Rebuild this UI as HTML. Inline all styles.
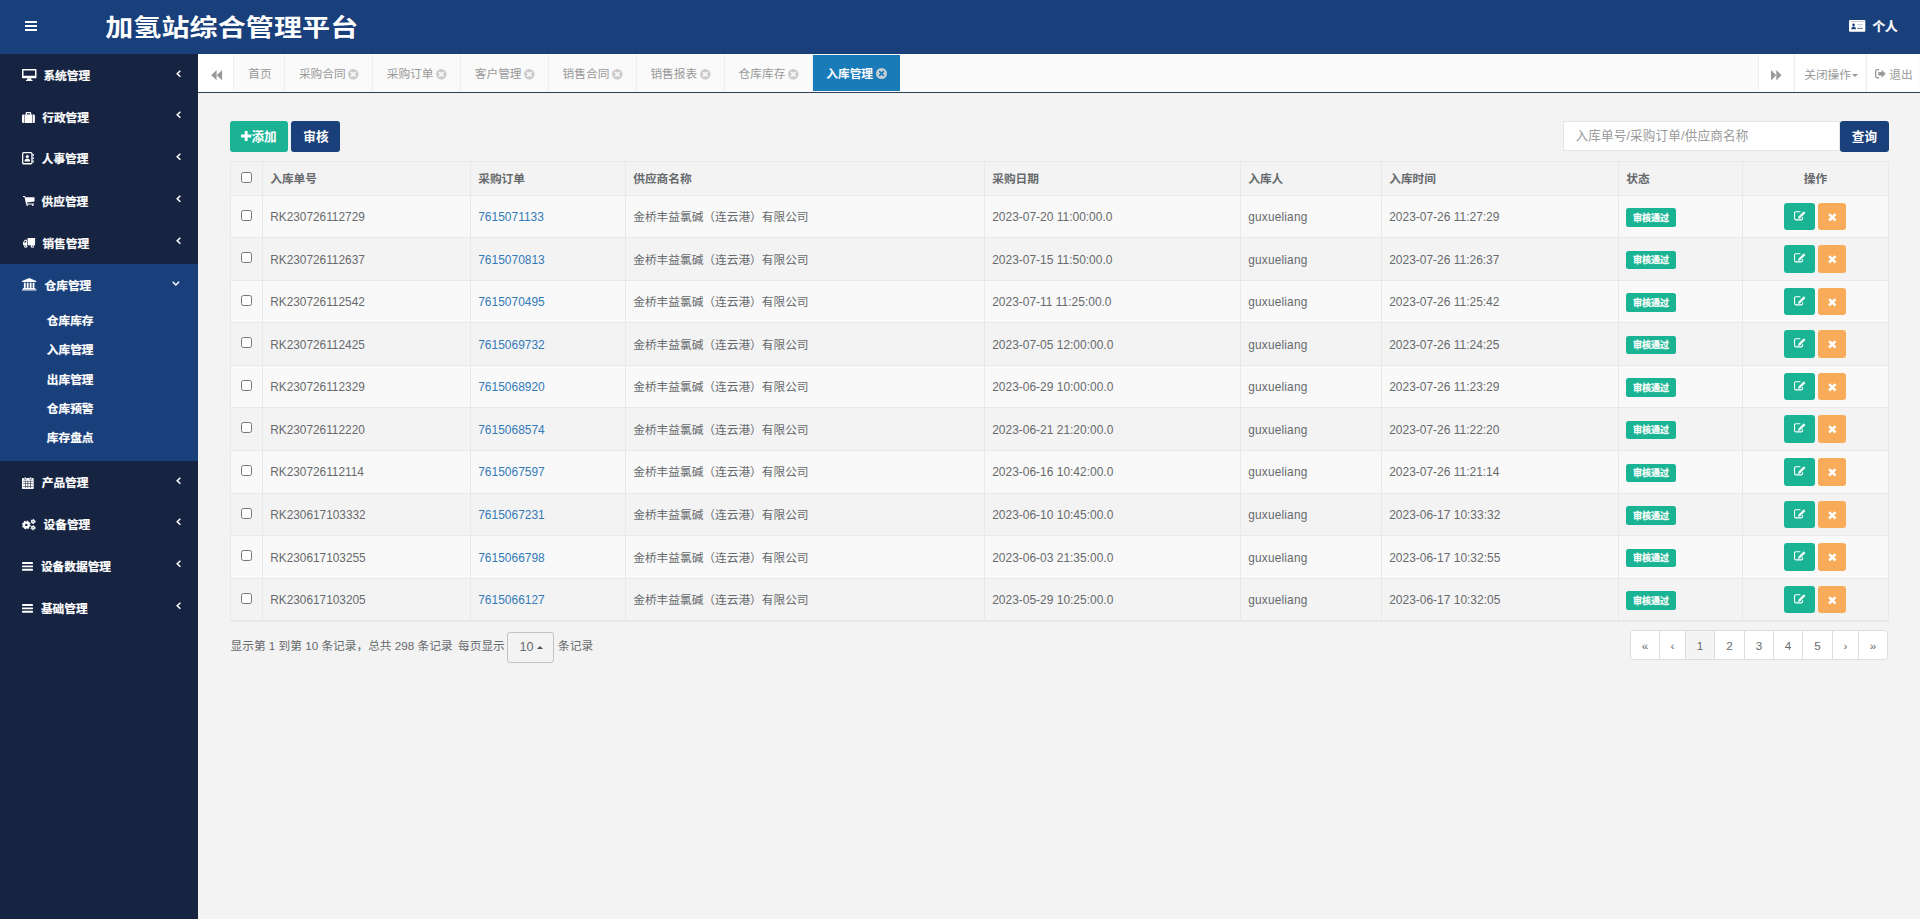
<!DOCTYPE html>
<html lang="zh-CN"><head><meta charset="utf-8"><title>加氢站综合管理平台</title>
<style>
*{box-sizing:border-box;margin:0;padding:0}
html,body{width:1920px;height:919px;overflow:hidden;background:#f3f3f4}
body{position:relative;font-family:"Liberation Sans","Noto Sans CJK SC",sans-serif;font-size:11.7px;color:#676a6c}
svg{position:absolute;display:block;overflow:visible}
i{font-style:normal}
/* header */
#hdr{position:absolute;left:0;top:0;width:1920px;height:54px;background:#1a407b}
#title{position:absolute;left:105.2px;top:0;height:54px;line-height:54px;font-size:28px;font-weight:700;letter-spacing:.12px;color:#fff;white-space:nowrap;transform:scaleY(.835);transform-origin:0 35px}
#user{position:absolute;left:1872.5px;top:15px;-webkit-text-stroke:.3px #fff;height:24px;line-height:24px;font-size:12.6px;font-weight:700;color:#fff}
/* sidebar */
#side{position:absolute;left:0;top:54px;width:198px;height:865px;background:#162341;color:#fff;font-weight:700}
#act{position:absolute;left:0;top:209.5px;width:198px;height:197.5px;background:#1a407b}
.mi{position:absolute;left:0;width:198px;height:41.9px;line-height:41.9px}
.mt{position:absolute;top:1px;margin-left:-.5px;white-space:nowrap}
.si{position:absolute;left:46.8px;height:29.3px;line-height:29.3px;white-space:nowrap}
/* tabs */
#tabs{position:absolute;left:198px;top:54px;width:1722px;height:39px;background:#fafafa;border-bottom:1px solid #2f4050;color:#999}
.roll{position:absolute;top:0;height:38px;background:#fff}
.roll.txt span{position:absolute;top:0;line-height:42.4px;white-space:nowrap}
.tab{position:absolute;top:0;height:38px;line-height:40.4px;margin-left:.5px;border-right:1px solid #eee;white-space:nowrap}
.tab span{position:absolute;left:13.8px;top:0}
.tab.on{top:1px;height:36px;line-height:37.8px;margin-left:0;background:#1a7bb9;color:#fff;font-weight:700;border-right:0}
.caret{position:absolute;left:56.7px;top:19.5px;width:0;height:0;border-left:3px solid transparent;border-right:3px solid transparent;border-top:3.5px solid #999}
/* main */
#main{position:absolute;left:0;top:0;width:1920px;height:919px;pointer-events:none}
.btn{position:absolute;top:121px;height:31px;border-radius:3px;color:#fff;font-size:12.6px;font-weight:700;line-height:31px;white-space:nowrap}
.btn span{position:absolute;top:1px}
.btn.add{left:230px;width:58px;background:#1ab394}
.btn.add span{left:21.5px}
.btn.chk{left:291px;width:49px;background:#1a407b}
.btn.chk span{left:12.3px}
.btn.qry{left:1840px;width:49px;background:#1a407b}
.btn.qry span{left:11.8px}
#search{position:absolute;left:1563px;top:121px;width:277px;height:30px;background:#fff;border:1px solid #e5e6e7;font-size:12.6px;color:#9a9a9a;line-height:28px}
#search span{position:absolute;left:11.5px;top:0;white-space:nowrap;letter-spacing:.15px}
/* table */
#tbl{position:absolute;left:230px;top:161px;width:1659px;height:461px;border:1px solid #e7eaec}
.tr{position:absolute;left:0;width:1657px;border-bottom:1px solid #e7eaec}
.tr.odd{background:#f9f9f9}
.tr.th{font-weight:700}
.td{position:absolute;top:0;bottom:0;border-left:1px solid #e7eaec;padding-left:7.2px;white-space:nowrap;display:flex;align-items:center}
.c0{left:0;width:31px;border-left:0;padding:0}
.c1{left:31px;width:208px}
.c2{left:239px;width:155px}
.c3{left:394px;width:359px}
.c4{left:753px;width:256px}
.c5{left:1009px;width:141px}
.c6{left:1150px;width:237px}
.c7{left:1387px;width:124px}
.c8{left:1511px;width:146px;padding:0}
.th .c8{justify-content:center}
a{color:#337ab7}
.cb{position:absolute;left:10px;top:50%;margin-top:-6.7px;width:11px;height:11px;border:1px solid #767676;border-radius:2.5px;background:#fff}
.lab{position:absolute;left:7px;top:12px;width:50px;height:19px;line-height:20.6px;-webkit-text-stroke:.25px #fff;border-radius:2.5px;background:#1ab394;color:#fff;font-size:9px;font-weight:700;text-align:center}
.ab{position:absolute;top:7px;bottom:7px;border-radius:3px}
.ab.ed{left:41px;width:31px;background:#1ab394}
.ab.de{left:75px;width:28px;background:#f8ac59}
/* pagination */
#pinfo,#pinfo2,#pinfo3{position:absolute;top:636px;height:20px;line-height:20px;white-space:nowrap}
#pinfo{left:230.5px}
#pinfo2{left:458px}
#pinfo3{left:558px}
#psize{position:absolute;left:507px;top:632px;width:47px;height:31px;border:1px solid #c2c2c2;border-radius:3px;font-size:12.6px;line-height:29px}
#psize span{position:absolute;left:11.5px;top:0}
.caretup{position:absolute;left:28.8px;top:13.3px;width:0;height:0;border-left:3.2px solid transparent;border-right:3.2px solid transparent;border-bottom:3.3px solid #555}
#pager{position:absolute;left:1630px;top:630px;width:258px;height:30px;background:#fff;border:1px solid #ddd;border-radius:3.5px;overflow:hidden}
.pg{position:absolute;top:-1px;height:30px;line-height:31.5px;text-align:center;border-left:1px solid #ddd}
.pg:first-child{border-left:0}
.pg.cur{background:#f4f4f4}

.tr:not(.th) .c1{font-size:11.85px}
.tr:not(.th) .c2,.tr:not(.th) .c4,.tr:not(.th) .c6{font-size:11.97px}
.tr:not(.th) .c5{font-size:11.85px;letter-spacing:.2px}
.th .td{padding-bottom:1.6px}
.tr:not(.th) .c3{padding-bottom:2.6px}
#side{-webkit-text-stroke:.2px #fff}
.tr.tall .lab{top:13px;height:18px;line-height:19.6px}
.tr.lo .td{padding-top:2px}
.tr.lo .c3{padding-top:2px;padding-bottom:2.6px}

</style></head><body>
<div id="hdr"><svg style="left:25px;top:20.5px" width="12" height="10" viewBox="0 0 12 10" ><rect y="0" width="12" height="2" rx=".3" fill="#fff"/><rect y="4" width="12" height="2" rx=".3" fill="#fff"/><rect y="8" width="12" height="2" rx=".3" fill="#fff"/></svg><div id="title">加氢站综合管理平台</div><svg style="left:1848.9px;top:20.2px" width="16.3" height="11.8" viewBox="0 0 16.3 11.8" ><rect width="16.3" height="11.8" rx="1" fill="#fff"/><rect x="1" y="1.1" width="14.3" height=".5" fill="#8a98b3"/><circle cx="4.6" cy="4.9" r="1.3" fill="#1a407b"/><path d="M2.3 9.3c0-1.9 1-2.7 2.3-2.7s2.3.8 2.3 2.7z" fill="#1a407b"/><rect x="8.3" y="4" width="5.4" height="1" fill="#c5cddd"/><rect x="8.3" y="5.9" width="4.6" height=".8" fill="#dfe4ed"/><rect x="8.3" y="7.9" width="5.4" height="1" fill="#5b729b"/></svg><div id="user">个人</div></div>
<div id="side">
<div id="act"></div>
<div class="mi" style="top:0.0px"><svg style="left:21.8px;top:15.1px" width="14.5" height="11.9" viewBox="0 0 14.5 11.9" ><path fill-rule="evenodd" fill="#fff" d="M.9 0h12.7a.9.9 0 0 1 .9.9v7.5a.9.9 0 0 1-.9.9H.9a.9.9 0 0 1-.9-.9V.9A.9.9 0 0 1 .9 0zM1.5 1.5v5.2h11.5V1.5z"/><path fill="#fff" d="M5.4 9.3h3.7l.5 1.6h.9v1H4v-1h.9z"/></svg><span class="mt" style="left:43.9px">系统管理</span><svg style="left:175.6px;top:15.6px" width="5.2" height="7.4" viewBox="0 0 5.2 7.4" ><path d="M4.4 .7L1.2 3.7l3.2 3" fill="none" stroke="#fff" stroke-width="1.5"/></svg></div>
<div class="mi" style="top:41.9px"><svg style="left:22.2px;top:16.3px" width="12.9" height="11" viewBox="0 0 12.9 11" ><path fill="#fff" d="M3.7 2.4V1.1A1.1 1.1 0 0 1 4.8 0h3.3a1.1 1.1 0 0 1 1.1 1.1v1.3H7.9V1.2H5v1.2z"/><path fill="#fff" d="M1.2 2.4h.8V11h-.8A1.2 1.2 0 0 1 0 9.8V3.6a1.2 1.2 0 0 1 1.2-1.2z"/><rect x="2.5" y="2.4" width="7.9" height="8.6" fill="#fff"/><path fill="#fff" d="M10.9 2.4h.8a1.2 1.2 0 0 1 1.2 1.2v6.2a1.2 1.2 0 0 1-1.2 1.2h-.8z"/></svg><span class="mt" style="left:42.7px">行政管理</span><svg style="left:175.6px;top:15.6px" width="5.2" height="7.4" viewBox="0 0 5.2 7.4" ><path d="M4.4 .7L1.2 3.7l3.2 3" fill="none" stroke="#fff" stroke-width="1.5"/></svg></div>
<div class="mi" style="top:83.8px"><svg style="left:22.1px;top:14.6px" width="11.8" height="12.4" viewBox="0 0 11.8 12.4" ><rect x=".65" y=".65" width="9.3" height="11.1" rx="1.1" fill="none" stroke="#fff" stroke-width="1.3"/><rect x="10.6" y="2" width="1.2" height="2" fill="#fff"/><rect x="10.6" y="5.2" width="1.2" height="2" fill="#fff"/><rect x="10.6" y="8.4" width="1.2" height="2" fill="#fff"/><circle cx="5.3" cy="4.5" r="1.6" fill="#fff"/><path fill="#fff" d="M2.5 9.5c0-2.1 1.2-2.9 2.8-2.9s2.8.8 2.8 2.9z"/></svg><span class="mt" style="left:42.2px;top:0">人事管理</span><svg style="left:175.6px;top:15.6px" width="5.2" height="7.4" viewBox="0 0 5.2 7.4" ><path d="M4.4 .7L1.2 3.7l3.2 3" fill="none" stroke="#fff" stroke-width="1.5"/></svg></div>
<div class="mi" style="top:125.7px"><svg style="left:22.7px;top:16.2px" width="11.5" height="10" viewBox="0 0 11.5 10" ><path fill="#fff" d="M0 0h2.1l.4 1.3h9v4.3l-7.7 1 .2.8h7v1H3.1L1.5 1H0z"/><circle cx="4.3" cy="9.1" r=".95" fill="#fff"/><circle cx="9.7" cy="9.1" r=".95" fill="#fff"/></svg><span class="mt" style="left:42.0px">供应管理</span><svg style="left:175.6px;top:15.6px" width="5.2" height="7.4" viewBox="0 0 5.2 7.4" ><path d="M4.4 .7L1.2 3.7l3.2 3" fill="none" stroke="#fff" stroke-width="1.5"/></svg></div>
<div class="mi" style="top:167.6px"><svg style="left:22.7px;top:16.3px" width="12.1" height="9.8" viewBox="0 0 12.1 9.8" ><rect x="4.6" y="0" width="7.5" height="7.2" rx=".4" fill="#fff"/><path fill-rule="evenodd" fill="#fff" d="M0 7.2V4.4l1.7-2.6h2.3v5.4zM1 4.5h2.1V2.8H2.1z"/><circle cx="2.8" cy="8.2" r="1.6" fill="#fff"/><circle cx="9.4" cy="8.2" r="1.6" fill="#fff"/><circle cx="2.8" cy="8.2" r=".6" fill="#162341"/><circle cx="9.4" cy="8.2" r=".6" fill="#162341"/></svg><span class="mt" style="left:42.9px">销售管理</span><svg style="left:175.6px;top:15.6px" width="5.2" height="7.4" viewBox="0 0 5.2 7.4" ><path d="M4.4 .7L1.2 3.7l3.2 3" fill="none" stroke="#fff" stroke-width="1.5"/></svg></div>
<div class="mi" style="top:209.5px"><svg style="left:21.9px;top:14.9px" width="14.35" height="12.5" viewBox="0 0 14.35 12.5" ><path fill="#fff" d="M7.18 0l7.17 2.9v1H0v-1z"/><rect x="1.9" y="4.7" width="1.8" height="5.2" fill="#fff"/><rect x="4.8" y="4.7" width="1.8" height="5.2" fill="#fff"/><rect x="7.75" y="4.7" width="1.8" height="5.2" fill="#fff"/><rect x="10.65" y="4.7" width="1.8" height="5.2" fill="#fff"/><rect x="1" y="10" width="12.35" height="1" fill="#fff"/><rect x="0" y="11.3" width="14.35" height="1.2" fill="#fff"/></svg><span class="mt" style="left:45.0px">仓库管理</span><svg style="left:172.4px;top:17px" width="7.8" height="5.2" viewBox="0 0 7.8 5.2" ><path d="M.7 .8l3.2 3.2L7.1 .8" fill="none" stroke="#fff" stroke-width="1.5"/></svg></div>
<div class="mi" style="top:407.0px"><svg style="left:22.2px;top:15.8px" width="11.7" height="12.1" viewBox="0 0 11.7 12.1" ><rect x="0" y="1.1" width="11.7" height="11" rx=".9" fill="#fff"/><rect x="2.3" y="0" width="1.7" height="2.9" rx=".5" fill="#fff" stroke="#162341" stroke-width=".5"/><rect x="7.7" y="0" width="1.7" height="2.9" rx=".5" fill="#fff" stroke="#162341" stroke-width=".5"/><rect x=".9" y="3.9" width="9.9" height=".55" fill="#162341"/><rect x=".9" y="6.5" width="9.9" height=".55" fill="#162341"/><rect x=".9" y="9" width="9.9" height=".55" fill="#162341"/><rect x="3.1" y="3.9" width=".55" height="7.4" fill="#162341"/><rect x="5.6" y="3.9" width=".55" height="7.4" fill="#162341"/><rect x="8.1" y="3.9" width=".55" height="7.4" fill="#162341"/></svg><span class="mt" style="left:42.2px">产品管理</span><svg style="left:175.6px;top:15.6px" width="5.2" height="7.4" viewBox="0 0 5.2 7.4" ><path d="M4.4 .7L1.2 3.7l3.2 3" fill="none" stroke="#fff" stroke-width="1.5"/></svg></div>
<div class="mi" style="top:448.9px"><svg style="left:22.2px;top:16.5px" width="13.6" height="11.3" viewBox="0 0 13.6 11.3" ><circle cx="4.3" cy="5.9" r="2.35" fill="none" stroke="#fff" stroke-width="2.3"/><circle cx="4.3" cy="5.9" r="3.7" fill="none" stroke="#fff" stroke-width="1.3" stroke-dasharray="1.7 1.206"/><circle cx="11.1" cy="2.5" r="1.3" fill="none" stroke="#fff" stroke-width="1.4"/><circle cx="11.1" cy="2.5" r="2.05" fill="none" stroke="#fff" stroke-width="1" stroke-dasharray="1.15 1"/><circle cx="11.1" cy="8.8" r="1.3" fill="none" stroke="#fff" stroke-width="1.4"/><circle cx="11.1" cy="8.8" r="2.05" fill="none" stroke="#fff" stroke-width="1" stroke-dasharray="1.15 1"/></svg><span class="mt" style="left:44.0px">设备管理</span><svg style="left:175.6px;top:15.6px" width="5.2" height="7.4" viewBox="0 0 5.2 7.4" ><path d="M4.4 .7L1.2 3.7l3.2 3" fill="none" stroke="#fff" stroke-width="1.5"/></svg></div>
<div class="mi" style="top:490.8px"><svg style="left:22.2px;top:16.9px" width="11" height="8.7" viewBox="0 0 11 8.7" ><rect y="0" width="11" height="1.9" rx=".4" fill="#fff"/><rect y="3.4" width="11" height="1.9" rx=".4" fill="#fff"/><rect y="6.8" width="11" height="1.9" rx=".4" fill="#fff"/></svg><span class="mt" style="left:41.4px">设备数据管理</span><svg style="left:175.6px;top:15.6px" width="5.2" height="7.4" viewBox="0 0 5.2 7.4" ><path d="M4.4 .7L1.2 3.7l3.2 3" fill="none" stroke="#fff" stroke-width="1.5"/></svg></div>
<div class="mi" style="top:532.7px"><svg style="left:22.2px;top:16.9px" width="11" height="8.7" viewBox="0 0 11 8.7" ><rect y="0" width="11" height="1.9" rx=".4" fill="#fff"/><rect y="3.4" width="11" height="1.9" rx=".4" fill="#fff"/><rect y="6.8" width="11" height="1.9" rx=".4" fill="#fff"/></svg><span class="mt" style="left:41.4px">基础管理</span><svg style="left:175.6px;top:15.6px" width="5.2" height="7.4" viewBox="0 0 5.2 7.4" ><path d="M4.4 .7L1.2 3.7l3.2 3" fill="none" stroke="#fff" stroke-width="1.5"/></svg></div>
<div class="si" style="top:252.0px">仓库库存</div>
<div class="si" style="top:281.3px">入库管理</div>
<div class="si" style="top:310.6px">出库管理</div>
<div class="si" style="top:339.9px">仓库预警</div>
<div class="si" style="top:369.2px">库存盘点</div>
</div>
<div id="tabs">
<div class="roll" style="left:0;width:36px;border-right:1px solid #eee"><svg style="left:12.7px;top:15.7px" width="11.1" height="10.3" viewBox="0 0 11.1 10.3" ><path fill="#999" d="M5.6 0v10.3L.2 5.15zM11.1 0v10.3L5.7 5.15z"/></svg></div>
<div class="tab" style="left:36.0px;width:50.6px"><span>首页</span></div>
<div class="tab" style="left:86.6px;width:87.8px"><span>采购合同</span><svg style="left:63.4px;top:14.8px" width="10.5" height="10.5" viewBox="0 0 10.5 10.5" ><circle cx="5.25" cy="5.25" r="5.25" fill="#ccc"/><path d="M3.04 3.04L7.46 7.46M7.46 3.04L3.04 7.46" stroke="#fafafa" stroke-width="1.7" fill="none"/></svg></div>
<div class="tab" style="left:174.4px;width:88.1px"><span>采购订单</span><svg style="left:63.4px;top:14.8px" width="10.5" height="10.5" viewBox="0 0 10.5 10.5" ><circle cx="5.25" cy="5.25" r="5.25" fill="#ccc"/><path d="M3.04 3.04L7.46 7.46M7.46 3.04L3.04 7.46" stroke="#fafafa" stroke-width="1.7" fill="none"/></svg></div>
<div class="tab" style="left:262.5px;width:87.8px"><span>客户管理</span><svg style="left:63.4px;top:14.8px" width="10.5" height="10.5" viewBox="0 0 10.5 10.5" ><circle cx="5.25" cy="5.25" r="5.25" fill="#ccc"/><path d="M3.04 3.04L7.46 7.46M7.46 3.04L3.04 7.46" stroke="#fafafa" stroke-width="1.7" fill="none"/></svg></div>
<div class="tab" style="left:350.3px;width:87.8px"><span>销售合同</span><svg style="left:63.4px;top:14.8px" width="10.5" height="10.5" viewBox="0 0 10.5 10.5" ><circle cx="5.25" cy="5.25" r="5.25" fill="#ccc"/><path d="M3.04 3.04L7.46 7.46M7.46 3.04L3.04 7.46" stroke="#fafafa" stroke-width="1.7" fill="none"/></svg></div>
<div class="tab" style="left:438.1px;width:88.2px"><span>销售报表</span><svg style="left:63.4px;top:14.8px" width="10.5" height="10.5" viewBox="0 0 10.5 10.5" ><circle cx="5.25" cy="5.25" r="5.25" fill="#ccc"/><path d="M3.04 3.04L7.46 7.46M7.46 3.04L3.04 7.46" stroke="#fafafa" stroke-width="1.7" fill="none"/></svg></div>
<div class="tab" style="left:526.3px;width:88.2px"><span>仓库库存</span><svg style="left:63.4px;top:14.8px" width="10.5" height="10.5" viewBox="0 0 10.5 10.5" ><circle cx="5.25" cy="5.25" r="5.25" fill="#ccc"/><path d="M3.04 3.04L7.46 7.46M7.46 3.04L3.04 7.46" stroke="#fafafa" stroke-width="1.7" fill="none"/></svg></div>
<div class="tab on" style="left:614.5px;width:87.5px"><span>入库管理</span><svg style="left:63px;top:13.2px" width="11" height="11" viewBox="0 0 11 11" ><circle cx="5.50" cy="5.50" r="5.50" fill="#c7cdd3"/><path d="M3.19 3.19L7.81 7.81M7.81 3.19L3.19 7.81" stroke="#1a7bb9" stroke-width="1.7" fill="none"/></svg></div>
<div class="roll" style="left:1560px;width:35px;border-left:1px solid #eee"><svg style="left:11.8px;top:15.6px" width="10.5" height="10.4" viewBox="0 0 10.5 10.4" ><path fill="#999" d="M0 0l5.2 5.2L0 10.4zM5.3 0l5.2 5.2-5.2 5.2z"/></svg></div>
<div class="roll txt" style="left:1596px;width:71px;border-left:1px solid #eee"><span style="left:9.2px">关闭操作</span><i class="caret"></i></div>
<div class="roll txt" style="left:1668px;width:53px;border-left:1px solid #eee"><svg style="left:8.0px;top:14.6px" width="10.7" height="9.4" viewBox="0 0 10.7 9.4" ><path fill="#999" d="M4 0v1.3H2.1a.8.8 0 0 0-.8.8v5.2a.8.8 0 0 0 .8.8H4v1.3H2.1A2.1 2.1 0 0 1 0 7.3V2.1A2.1 2.1 0 0 1 2.1 0z"/><path fill="#999" d="M6.6 .7l4.1 4-4.1 4V6.4H3.3V3H6.6z"/></svg><span style="left:22.2px;line-height:41px">退出</span></div>
</div>
<div id="main">
<div class="btn add"><svg style="left:10.9px;top:9.9px" width="10.3" height="10.1" viewBox="0 0 10.3 10.1" ><path fill="#fff" d="M3.7 0h2.9v3.6h3.7v2.9H6.6v3.6H3.7V6.5H0V3.6h3.7z"/></svg><span>添加</span></div>
<div class="btn chk"><span>审核</span></div>
<div id="search"><span>入库单号/采购订单/供应商名称</span></div>
<div class="btn qry"><span>查询</span></div>
<div id="tbl">
<div class="tr th" style="top:0;height:34px"><div class="td c0"><i class="cb"></i></div><div class="td c1">入库单号</div><div class="td c2">采购订单</div><div class="td c3">供应商名称</div><div class="td c4">采购日期</div><div class="td c5">入库人</div><div class="td c6">入库时间</div><div class="td c7">状态</div><div class="td c8">操作</div></div>
<div class="tr odd" style="top:34px;height:42px"><div class="td c0"><i class="cb"></i></div><div class="td c1">RK230726112729</div><div class="td c2"><a>7615071133</a></div><div class="td c3">金桥丰益氯碱（连云港）有限公司</div><div class="td c4">2023-07-20 11:00:00.0</div><div class="td c5">guxueliang</div><div class="td c6">2023-07-26 11:27:29</div><div class="td c7"><b class="lab">审核通过</b></div><div class="td c8"><i class="ab ed"><svg style="left:9.7px;top:7.8px" width="11.6" height="9.4" viewBox="0 0 11.6 9.4" ><path d="M6.4 .75H1.8A1.25 1.25 0 0 0 .55 2v5.6A1.25 1.25 0 0 0 1.8 8.85h5.6A1.25 1.25 0 0 0 8.65 7.6V6.2" fill="none" stroke="#fff" stroke-width="1.1"/><path fill="#fff" fill-opacity=".93" d="M9.8 .3l1.7 1.7-5.2 5.2-2.4.7.7-2.4z"/></svg></i><i class="ab de"><svg style="left:9.6px;top:9.7px" width="8.6" height="8.6" viewBox="0 0 8.6 8.6" ><path d="M1.1 1.1l6.4 6.4M7.5 1.1L1.1 7.5" stroke="#fff" stroke-width="2.5" fill="none"/></svg></i></div></div>
<div class="tr even tall lo" style="top:76px;height:43px"><div class="td c0"><i class="cb"></i></div><div class="td c1">RK230726112637</div><div class="td c2"><a>7615070813</a></div><div class="td c3">金桥丰益氯碱（连云港）有限公司</div><div class="td c4">2023-07-15 11:50:00.0</div><div class="td c5">guxueliang</div><div class="td c6">2023-07-26 11:26:37</div><div class="td c7"><b class="lab">审核通过</b></div><div class="td c8"><i class="ab ed"><svg style="left:9.7px;top:7.8px" width="11.6" height="9.4" viewBox="0 0 11.6 9.4" ><path d="M6.4 .75H1.8A1.25 1.25 0 0 0 .55 2v5.6A1.25 1.25 0 0 0 1.8 8.85h5.6A1.25 1.25 0 0 0 8.65 7.6V6.2" fill="none" stroke="#fff" stroke-width="1.1"/><path fill="#fff" fill-opacity=".93" d="M9.8 .3l1.7 1.7-5.2 5.2-2.4.7.7-2.4z"/></svg></i><i class="ab de"><svg style="left:9.6px;top:9.7px" width="8.6" height="8.6" viewBox="0 0 8.6 8.6" ><path d="M1.1 1.1l6.4 6.4M7.5 1.1L1.1 7.5" stroke="#fff" stroke-width="2.5" fill="none"/></svg></i></div></div>
<div class="tr odd" style="top:119px;height:42px"><div class="td c0"><i class="cb"></i></div><div class="td c1">RK230726112542</div><div class="td c2"><a>7615070495</a></div><div class="td c3">金桥丰益氯碱（连云港）有限公司</div><div class="td c4">2023-07-11 11:25:00.0</div><div class="td c5">guxueliang</div><div class="td c6">2023-07-26 11:25:42</div><div class="td c7"><b class="lab">审核通过</b></div><div class="td c8"><i class="ab ed"><svg style="left:9.7px;top:7.8px" width="11.6" height="9.4" viewBox="0 0 11.6 9.4" ><path d="M6.4 .75H1.8A1.25 1.25 0 0 0 .55 2v5.6A1.25 1.25 0 0 0 1.8 8.85h5.6A1.25 1.25 0 0 0 8.65 7.6V6.2" fill="none" stroke="#fff" stroke-width="1.1"/><path fill="#fff" fill-opacity=".93" d="M9.8 .3l1.7 1.7-5.2 5.2-2.4.7.7-2.4z"/></svg></i><i class="ab de"><svg style="left:9.6px;top:9.7px" width="8.6" height="8.6" viewBox="0 0 8.6 8.6" ><path d="M1.1 1.1l6.4 6.4M7.5 1.1L1.1 7.5" stroke="#fff" stroke-width="2.5" fill="none"/></svg></i></div></div>
<div class="tr even tall lo" style="top:161px;height:43px"><div class="td c0"><i class="cb"></i></div><div class="td c1">RK230726112425</div><div class="td c2"><a>7615069732</a></div><div class="td c3">金桥丰益氯碱（连云港）有限公司</div><div class="td c4">2023-07-05 12:00:00.0</div><div class="td c5">guxueliang</div><div class="td c6">2023-07-26 11:24:25</div><div class="td c7"><b class="lab">审核通过</b></div><div class="td c8"><i class="ab ed"><svg style="left:9.7px;top:7.8px" width="11.6" height="9.4" viewBox="0 0 11.6 9.4" ><path d="M6.4 .75H1.8A1.25 1.25 0 0 0 .55 2v5.6A1.25 1.25 0 0 0 1.8 8.85h5.6A1.25 1.25 0 0 0 8.65 7.6V6.2" fill="none" stroke="#fff" stroke-width="1.1"/><path fill="#fff" fill-opacity=".93" d="M9.8 .3l1.7 1.7-5.2 5.2-2.4.7.7-2.4z"/></svg></i><i class="ab de"><svg style="left:9.6px;top:9.7px" width="8.6" height="8.6" viewBox="0 0 8.6 8.6" ><path d="M1.1 1.1l6.4 6.4M7.5 1.1L1.1 7.5" stroke="#fff" stroke-width="2.5" fill="none"/></svg></i></div></div>
<div class="tr odd" style="top:204px;height:42px"><div class="td c0"><i class="cb"></i></div><div class="td c1">RK230726112329</div><div class="td c2"><a>7615068920</a></div><div class="td c3">金桥丰益氯碱（连云港）有限公司</div><div class="td c4">2023-06-29 10:00:00.0</div><div class="td c5">guxueliang</div><div class="td c6">2023-07-26 11:23:29</div><div class="td c7"><b class="lab">审核通过</b></div><div class="td c8"><i class="ab ed"><svg style="left:9.7px;top:7.8px" width="11.6" height="9.4" viewBox="0 0 11.6 9.4" ><path d="M6.4 .75H1.8A1.25 1.25 0 0 0 .55 2v5.6A1.25 1.25 0 0 0 1.8 8.85h5.6A1.25 1.25 0 0 0 8.65 7.6V6.2" fill="none" stroke="#fff" stroke-width="1.1"/><path fill="#fff" fill-opacity=".93" d="M9.8 .3l1.7 1.7-5.2 5.2-2.4.7.7-2.4z"/></svg></i><i class="ab de"><svg style="left:9.6px;top:9.7px" width="8.6" height="8.6" viewBox="0 0 8.6 8.6" ><path d="M1.1 1.1l6.4 6.4M7.5 1.1L1.1 7.5" stroke="#fff" stroke-width="2.5" fill="none"/></svg></i></div></div>
<div class="tr even tall lo" style="top:246px;height:43px"><div class="td c0"><i class="cb"></i></div><div class="td c1">RK230726112220</div><div class="td c2"><a>7615068574</a></div><div class="td c3">金桥丰益氯碱（连云港）有限公司</div><div class="td c4">2023-06-21 21:20:00.0</div><div class="td c5">guxueliang</div><div class="td c6">2023-07-26 11:22:20</div><div class="td c7"><b class="lab">审核通过</b></div><div class="td c8"><i class="ab ed"><svg style="left:9.7px;top:7.8px" width="11.6" height="9.4" viewBox="0 0 11.6 9.4" ><path d="M6.4 .75H1.8A1.25 1.25 0 0 0 .55 2v5.6A1.25 1.25 0 0 0 1.8 8.85h5.6A1.25 1.25 0 0 0 8.65 7.6V6.2" fill="none" stroke="#fff" stroke-width="1.1"/><path fill="#fff" fill-opacity=".93" d="M9.8 .3l1.7 1.7-5.2 5.2-2.4.7.7-2.4z"/></svg></i><i class="ab de"><svg style="left:9.6px;top:9.7px" width="8.6" height="8.6" viewBox="0 0 8.6 8.6" ><path d="M1.1 1.1l6.4 6.4M7.5 1.1L1.1 7.5" stroke="#fff" stroke-width="2.5" fill="none"/></svg></i></div></div>
<div class="tr odd tall" style="top:289px;height:43px"><div class="td c0"><i class="cb"></i></div><div class="td c1">RK230726112114</div><div class="td c2"><a>7615067597</a></div><div class="td c3">金桥丰益氯碱（连云港）有限公司</div><div class="td c4">2023-06-16 10:42:00.0</div><div class="td c5">guxueliang</div><div class="td c6">2023-07-26 11:21:14</div><div class="td c7"><b class="lab">审核通过</b></div><div class="td c8"><i class="ab ed"><svg style="left:9.7px;top:7.8px" width="11.6" height="9.4" viewBox="0 0 11.6 9.4" ><path d="M6.4 .75H1.8A1.25 1.25 0 0 0 .55 2v5.6A1.25 1.25 0 0 0 1.8 8.85h5.6A1.25 1.25 0 0 0 8.65 7.6V6.2" fill="none" stroke="#fff" stroke-width="1.1"/><path fill="#fff" fill-opacity=".93" d="M9.8 .3l1.7 1.7-5.2 5.2-2.4.7.7-2.4z"/></svg></i><i class="ab de"><svg style="left:9.6px;top:9.7px" width="8.6" height="8.6" viewBox="0 0 8.6 8.6" ><path d="M1.1 1.1l6.4 6.4M7.5 1.1L1.1 7.5" stroke="#fff" stroke-width="2.5" fill="none"/></svg></i></div></div>
<div class="tr even" style="top:332px;height:42px"><div class="td c0"><i class="cb"></i></div><div class="td c1">RK230617103332</div><div class="td c2"><a>7615067231</a></div><div class="td c3">金桥丰益氯碱（连云港）有限公司</div><div class="td c4">2023-06-10 10:45:00.0</div><div class="td c5">guxueliang</div><div class="td c6">2023-06-17 10:33:32</div><div class="td c7"><b class="lab">审核通过</b></div><div class="td c8"><i class="ab ed"><svg style="left:9.7px;top:7.8px" width="11.6" height="9.4" viewBox="0 0 11.6 9.4" ><path d="M6.4 .75H1.8A1.25 1.25 0 0 0 .55 2v5.6A1.25 1.25 0 0 0 1.8 8.85h5.6A1.25 1.25 0 0 0 8.65 7.6V6.2" fill="none" stroke="#fff" stroke-width="1.1"/><path fill="#fff" fill-opacity=".93" d="M9.8 .3l1.7 1.7-5.2 5.2-2.4.7.7-2.4z"/></svg></i><i class="ab de"><svg style="left:9.6px;top:9.7px" width="8.6" height="8.6" viewBox="0 0 8.6 8.6" ><path d="M1.1 1.1l6.4 6.4M7.5 1.1L1.1 7.5" stroke="#fff" stroke-width="2.5" fill="none"/></svg></i></div></div>
<div class="tr odd tall lo" style="top:374px;height:43px"><div class="td c0"><i class="cb"></i></div><div class="td c1">RK230617103255</div><div class="td c2"><a>7615066798</a></div><div class="td c3">金桥丰益氯碱（连云港）有限公司</div><div class="td c4">2023-06-03 21:35:00.0</div><div class="td c5">guxueliang</div><div class="td c6">2023-06-17 10:32:55</div><div class="td c7"><b class="lab">审核通过</b></div><div class="td c8"><i class="ab ed"><svg style="left:9.7px;top:7.8px" width="11.6" height="9.4" viewBox="0 0 11.6 9.4" ><path d="M6.4 .75H1.8A1.25 1.25 0 0 0 .55 2v5.6A1.25 1.25 0 0 0 1.8 8.85h5.6A1.25 1.25 0 0 0 8.65 7.6V6.2" fill="none" stroke="#fff" stroke-width="1.1"/><path fill="#fff" fill-opacity=".93" d="M9.8 .3l1.7 1.7-5.2 5.2-2.4.7.7-2.4z"/></svg></i><i class="ab de"><svg style="left:9.6px;top:9.7px" width="8.6" height="8.6" viewBox="0 0 8.6 8.6" ><path d="M1.1 1.1l6.4 6.4M7.5 1.1L1.1 7.5" stroke="#fff" stroke-width="2.5" fill="none"/></svg></i></div></div>
<div class="tr even" style="top:417px;height:42px"><div class="td c0"><i class="cb"></i></div><div class="td c1">RK230617103205</div><div class="td c2"><a>7615066127</a></div><div class="td c3">金桥丰益氯碱（连云港）有限公司</div><div class="td c4">2023-05-29 10:25:00.0</div><div class="td c5">guxueliang</div><div class="td c6">2023-06-17 10:32:05</div><div class="td c7"><b class="lab">审核通过</b></div><div class="td c8"><i class="ab ed"><svg style="left:9.7px;top:7.8px" width="11.6" height="9.4" viewBox="0 0 11.6 9.4" ><path d="M6.4 .75H1.8A1.25 1.25 0 0 0 .55 2v5.6A1.25 1.25 0 0 0 1.8 8.85h5.6A1.25 1.25 0 0 0 8.65 7.6V6.2" fill="none" stroke="#fff" stroke-width="1.1"/><path fill="#fff" fill-opacity=".93" d="M9.8 .3l1.7 1.7-5.2 5.2-2.4.7.7-2.4z"/></svg></i><i class="ab de"><svg style="left:9.6px;top:9.7px" width="8.6" height="8.6" viewBox="0 0 8.6 8.6" ><path d="M1.1 1.1l6.4 6.4M7.5 1.1L1.1 7.5" stroke="#fff" stroke-width="2.5" fill="none"/></svg></i></div></div>
</div>
<div id="pinfo">显示第 1 到第 10 条记录，总共 298 条记录</div>
<div id="pinfo2">每页显示</div>
<div id="psize"><span>10</span><i class="caretup"></i></div>
<div id="pinfo3">条记录</div>
<div id="pager"><span class="pg" style="left:0px;width:28px">«</span><span class="pg" style="left:28px;width:26px">‹</span><span class="pg cur" style="left:54px;width:29px">1</span><span class="pg" style="left:83px;width:30px">2</span><span class="pg" style="left:113px;width:29px">3</span><span class="pg" style="left:142px;width:29px">4</span><span class="pg" style="left:171px;width:30px">5</span><span class="pg" style="left:201px;width:26px">›</span><span class="pg" style="left:227px;width:29px">»</span></div>
</div>
</body></html>
